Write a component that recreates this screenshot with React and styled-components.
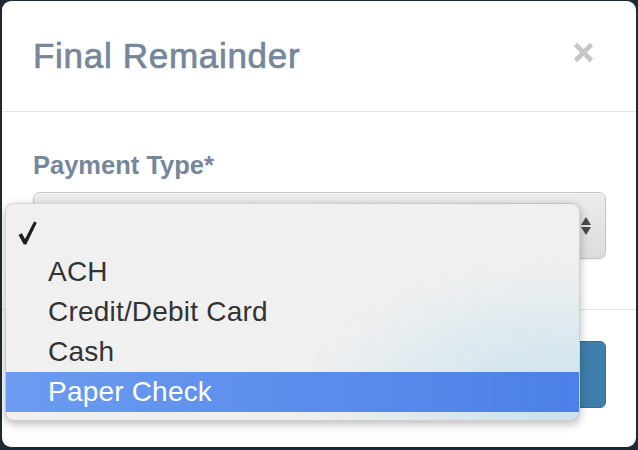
import React from "react";
import styled, { createGlobalStyle } from "styled-components";

const GlobalStyle = createGlobalStyle`
  * { box-sizing: border-box; }
  body {
    margin: 0;
    background: #1d2a35;
    font-family: "Liberation Sans", Arial, sans-serif;
  }
`;

const options = ["ACH", "Credit/Debit Card", "Cash", "Paper Check"];

function CheckMark() {
  return (
    <svg width="19" height="24" viewBox="0 0 19 24">
      <path d="M0.5 14 L4 12.3 L7 18 L16 0.5 L18.8 1.8 L8.3 23.5 L5.8 23.5 Z" fill="#1e1e1e" />
    </svg>
  );
}

function CloseIcon() {
  return (
    <svg width="23" height="23" viewBox="0 0 23 23">
      <path d="M3.5 3.5 L19.5 19.5 M19.5 3.5 L3.5 19.5" stroke="#c6c6c6" strokeWidth="4.6" />
    </svg>
  );
}

function Arrows() {
  return (
    <svg width="12" height="20" viewBox="0 0 12 20">
      <path d="M6 1 L11 9 L1 9 Z" fill="#4a4a4a" />
      <path d="M1 11 L11 11 L6 19 Z" fill="#4a4a4a" />
    </svg>
  );
}

export default function App() {
  const selected = "Paper Check";
  return (
    <>
      <GlobalStyle />
      <Page>
        <Modal>
          <Header>
            <Title>Final Remainder</Title>
            <CloseBtn><CloseIcon /></CloseBtn>
          </Header>
          <Body>
            <Label>Payment Type*</Label>
            <SelectBox>
              <Arrows />
            </SelectBox>
          </Body>
          <Footer>
            <SubmitBtn>Submit</SubmitBtn>
          </Footer>
          <Menu>
            <Option>
              <CheckCell><CheckMark /></CheckCell>
              <span></span>
            </Option>
            {options.map((o) => (
              <Option key={o} $active={o === selected}>
                <CheckCell />
                <span>{o}</span>
              </Option>
            ))}
          </Menu>
        </Modal>
      </Page>
    </>
  );
}

const Page = styled.div`
  height: 450px;
  padding: 1px 2px 3px 2px;
`;

const Modal = styled.div`
  position: relative;
  height: 100%;
  background: #fff;
  border-radius: 9px;
  display: flex;
  flex-direction: column;
`;

const Header = styled.div`
  height: 111px;
  border-bottom: 1px solid #e4e4e4;
  display: flex;
  align-items: center;
  justify-content: space-between;
  padding: 0 41px 0 31px;
`;

const Title = styled.h1`
  margin: 0;
  font-size: 35px;
  font-weight: 400;
  letter-spacing: 0.7px;
  color: #75879b;
  -webkit-text-stroke: 0.7px #75879b;
`;

const CloseBtn = styled.div`
  display: flex;
  margin-top: -8px;
`;

const Body = styled.div`
  padding: 38px 30px 50px 31px;
  border-bottom: 1px solid #e4e4e4;
`;

const Label = styled.div`
  font-size: 25.5px;
  font-weight: 700;
  line-height: 30px;
  color: #75879b;
  margin-bottom: 12px;
`;

const SelectBox = styled.div`
  height: 67px;
  border: 1px solid #c4c4c4;
  border-radius: 7px;
  background: linear-gradient(#ececec, #dcdcdc);
  box-shadow: inset 0 1px 0 rgba(255, 255, 255, 0.6), 0 1px 2px rgba(0, 0, 0, 0.08);
  display: flex;
  align-items: center;
  justify-content: flex-end;
  padding-right: 13px;
`;

const Footer = styled.div`
  flex: 1;
  display: flex;
  justify-content: flex-end;
  align-items: flex-start;
  padding: 31px 30px 0 30px;
`;

const SubmitBtn = styled.div`
  height: 67px;
  padding: 0 34px;
  display: flex;
  align-items: center;
  background: #3e7fab;
  border: 1px solid #336f9b;
  border-radius: 6px;
  color: #fff;
  font-size: 26px;
`;

const Menu = styled.div`
  position: absolute;
  left: 3px;
  top: 202px;
  width: 575px;
  padding: 8px 0;
  border-radius: 9px;
  border: 1px solid rgba(0, 0, 0, 0.12);
  background:
    radial-gradient(ellipse 260px 150px at 96% 95%, rgba(196, 224, 238, 0.9), rgba(196, 224, 238, 0) 100%),
    #f0f0f0;
  box-shadow: 0 3px 10px rgba(0, 0, 0, 0.28);
  overflow: hidden;
`;

const Option = styled.div`
  height: 40px;
  display: grid;
  grid-template-columns: 42px 1fr;
  align-items: center;
  font-size: 28px;
  letter-spacing: 0.2px;
  color: ${(p) => (p.$active ? "#fff" : "#333")};
  background: ${(p) => (p.$active ? "linear-gradient(90deg, #6b9cf0, #4b80e8)" : "transparent")};
`;

const CheckCell = styled.div`
  display: flex;
  padding-left: 12px;
  padding-top: 2px;
`;
